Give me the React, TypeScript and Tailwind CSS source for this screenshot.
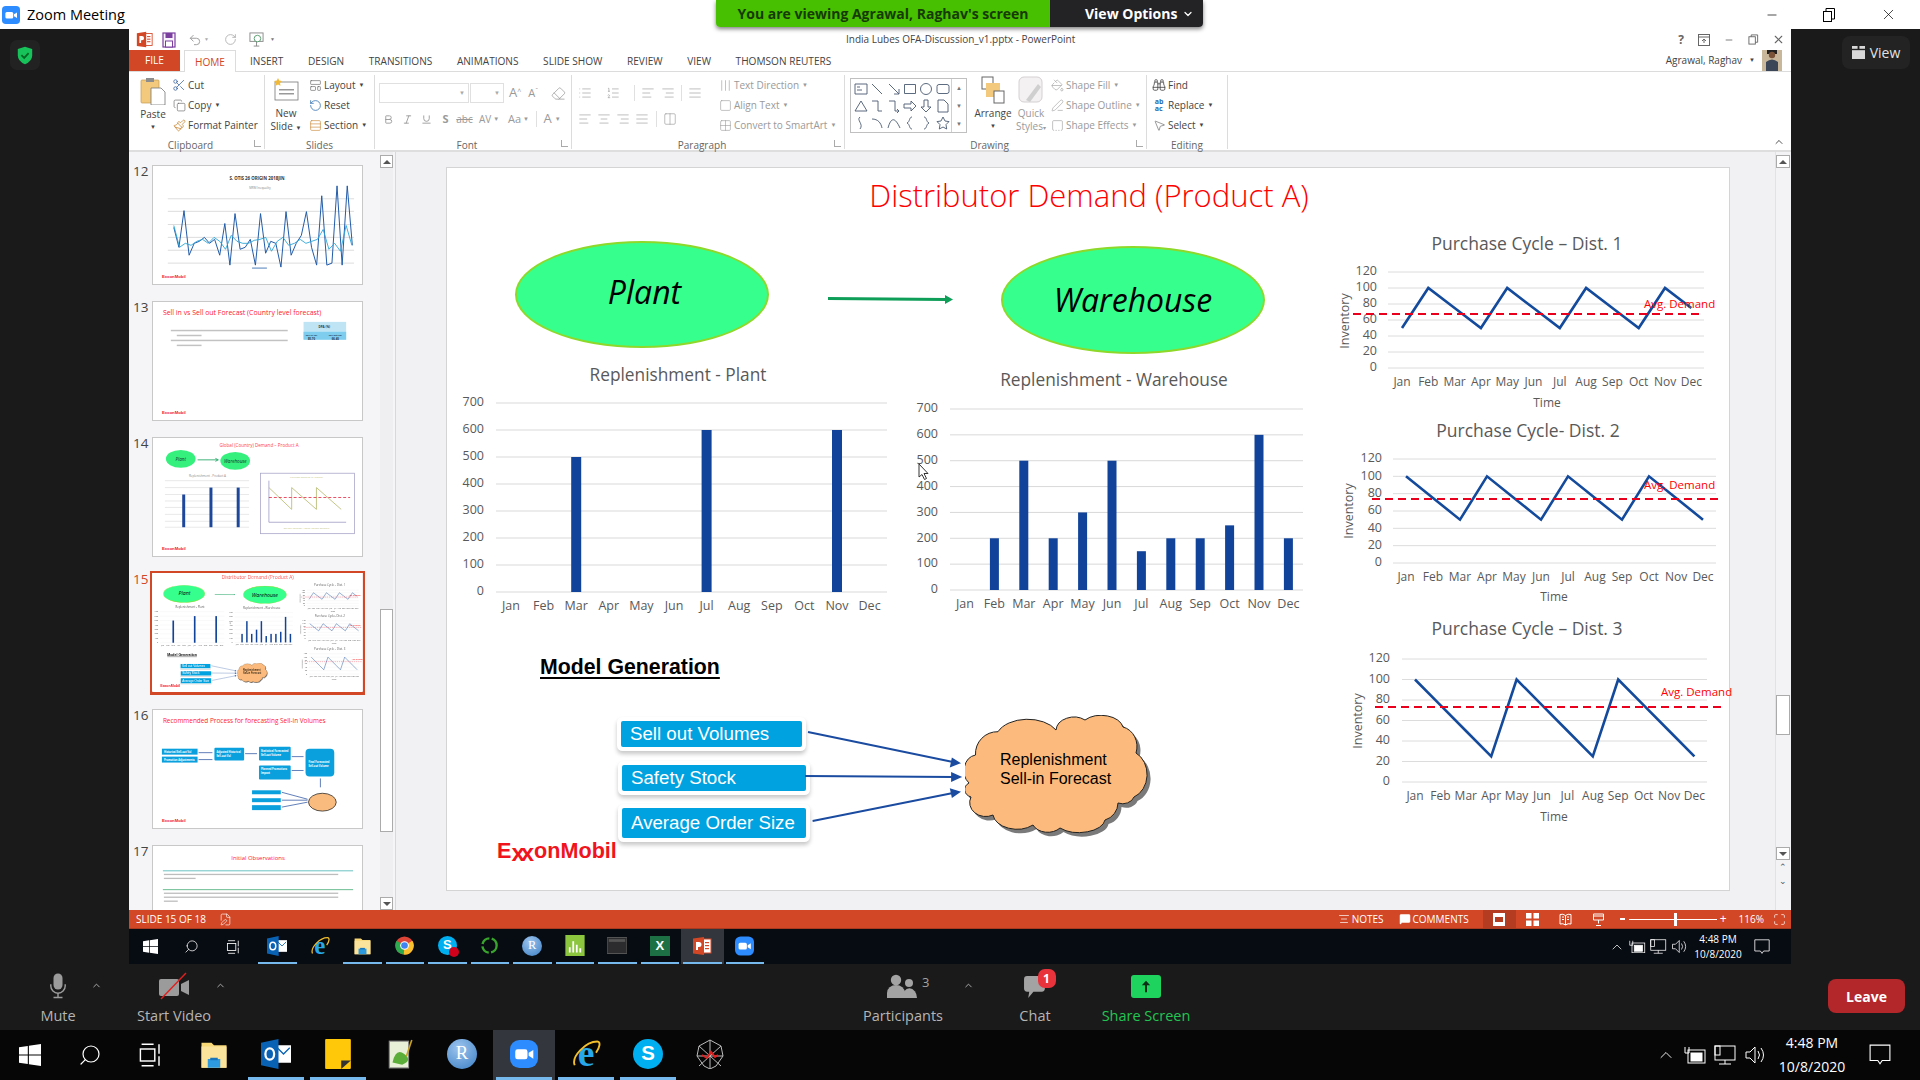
import React from "react";
import {
  Scissors, Copy, Paintbrush, LayoutTemplate, RotateCcw, RotateCw, Rows3, Undo2, Minus, X, Search,
  Binoculars, MousePointer2, ChevronUp, ChevronDown, Bold, Italic, Underline, Eraser, AlignLeft, AlignCenter, AlignRight,
  AlignJustify, List, ListOrdered, Columns2, Grid2x2, Square, SquareDashedBottom, PaintBucket, PenLine, MessageSquare,
  FileEdit, Maximize,
} from "lucide-react";

const MONTHS = ["Jan", "Feb", "Mar", "Apr", "May", "Jun", "Jul", "Aug", "Sep", "Oct", "Nov", "Dec"];
const LABEL_FONT = "'Open Sans', sans-serif";

function BarChart(p: { className: string; vb: string; title: string; tx: number; ty: number; x0: number; x1: number; top: number; bot: number; lx: number; mx: number; mp: number; my: number; bw: number; vals: number[] }) {
  const pitch = (p.bot - p.top) / 7;
  return (
    <svg viewBox={p.vb} className={p.className} fontFamily={LABEL_FONT}>
      <text x={p.tx} y={p.ty} textAnchor="middle" dominantBaseline="middle" fontSize="17.3" fill="#595959">{p.title}</text>
      {[700, 600, 500, 400, 300, 200, 100, 0].map((v, i) => (
        <g key={v}>
          <line x1={p.x0} x2={p.x1} y1={p.top + i * pitch} y2={p.top + i * pitch} stroke="#d9d9d9" strokeWidth="1" />
          <text x={p.lx} y={p.top + i * pitch} textAnchor="end" dominantBaseline="middle" fontSize="12.5" fill="#595959">{v}</text>
        </g>
      ))}
      {p.vals.map((v, i) => (
        <g key={i}>
          {v > 0 && <rect x={p.mx + i * p.mp - p.bw / 2} y={p.bot - (v / 100) * pitch} width={p.bw} height={(v / 100) * pitch} fill="#104399" />}
          <text x={p.mx + i * p.mp} y={p.my} textAnchor="middle" dominantBaseline="middle" fontSize="12.5" fill="#595959">{MONTHS[i]}</text>
        </g>
      ))}
    </svg>
  );
}

function LineChart(p: { className: string; vb: string; title: string; tx: number; ty: number; x0: number; x1: number; top: number; bot: number; lx: number; mx: number; mp: number; my: number; timeX: number; timeY: number; invX: number; invY: number; vals: number[]; dx0: number; dx1: number; dy: number; ax: number; ay: number }) {
  const pitch = (p.bot - p.top) / 6;
  const pts = p.vals.map((v, i) => `${p.mx + i * p.mp},${p.bot - (v / 20) * pitch}`).join(" ");
  return (
    <svg viewBox={p.vb} className={p.className} fontFamily={LABEL_FONT}>
      <text x={p.tx} y={p.ty} textAnchor="middle" dominantBaseline="middle" fontSize="17.5" fill="#595959">{p.title}</text>
      {[120, 100, 80, 60, 40, 20, 0].map((v, i) => (
        <g key={v}>
          <line x1={p.x0} x2={p.x1} y1={p.top + i * pitch} y2={p.top + i * pitch} stroke="#dcdcdc" strokeWidth="1" />
          <text x={p.lx} y={p.top + i * pitch} textAnchor="end" dominantBaseline="middle" fontSize="12.5" fill="#595959">{v}</text>
        </g>
      ))}
      {MONTHS.map((m, i) => (
        <text key={m} x={p.mx + i * p.mp} y={p.my} textAnchor="middle" dominantBaseline="middle" fontSize="12" fill="#595959">{m}</text>
      ))}
      <text x={p.timeX} y={p.timeY} textAnchor="middle" dominantBaseline="middle" fontSize="12" fill="#595959">Time</text>
      <text x={p.invX} y={p.invY} textAnchor="middle" dominantBaseline="middle" fontSize="12.5" fill="#595959" transform={`rotate(-90 ${p.invX} ${p.invY})`}>Inventory</text>
      <polyline points={pts} fill="none" stroke="#144a9c" strokeWidth="2.6" strokeLinejoin="miter" />
      <line x1={p.dx0} x2={p.dx1} y1={p.dy} y2={p.dy} stroke="#e8001c" strokeWidth="1.8" strokeDasharray="8 5" />
      <text x={p.ax} y={p.ay} dominantBaseline="middle" fontSize="11.5" fill="#ff0000">Avg. Demand</text>
    </svg>
  );
}

function Cloud() {
  const d = "M10.5 40 A22 22 0 0 1 33 16.7 A32 20 0 0 1 91 15 A18 14 0 0 1 120 5 A22 14 0 0 1 158 12 A18 20 0 0 1 171 38 A20 24 0 0 1 169 82 A12 10 0 0 1 153 88 A18 18 0 0 1 140 105 A26 14 0 0 1 95 113 A16 12 0 0 1 68 110 A24 16 0 0 1 28 100 A16 14 0 0 1 6 82 A10 8 0 0 1 4 68 A14 16 0 0 1 10.5 40 Z";
  return (
    <svg viewBox="0 0 186 124" className="absolute left-[518px] top-[547px] w-[186px] h-[124px]">
      <path d={d} fill="#7a7a7a" transform="translate(3.5 4)" />
      <path d={d} fill="#fcbb7c" stroke="#222" strokeWidth="1" />
    </svg>
  );
}

function SlideBox({ className, text }: { className: string; text: string }) {
  return (
    <div className={`absolute bg-[#00a2e0] border-0 rounded-[2px] shadow-[0_0_0_4px_#fff,0_3px_4px_4px_#c8c8c8] flex items-center pl-[9px] text-white text-[18.7px] leading-none font-['Liberation_Sans',Arial,sans-serif] ${className}`}>
      {text}
    </div>
  );
}

function Slide() {
  return (
    <div className="relative w-[1282px] h-[722px] bg-white shadow-[0_0_0_1px_#d4d4d4] font-['Open_Sans',sans-serif]">
      <div className="absolute inset-x-0 top-[5px] pl-[2px] text-center text-[31px] leading-[44px] text-[#ff0000] font-light">Distributor Demand (Product A)</div>
      <div className="absolute left-[68px] top-[73px] w-[254px] h-[107px] rounded-[50%] bg-[#36ff8e] border-2 border-[#8ed82a] flex items-center justify-center pl-[5px] pb-[6px] italic text-[32px] text-black">Plant</div>
      <div className="absolute left-[554px] top-[78px] w-[264px] h-[108px] rounded-[50%] bg-[#36ff8e] border-2 border-[#8ed82a] flex items-center justify-center italic text-[32px] text-black">Warehouse</div>
      <svg viewBox="0 0 130 12" className="absolute left-[379px] top-[125px] w-[130px] h-[12px]">
        <path d="M2 5.5 L120 6.5" stroke="#0e9e58" strokeWidth="3" />
        <path d="M119 2 L127 6.5 L119 11 Z" fill="#0e9e58" />
      </svg>
      <BarChart className="absolute left-[8px] top-[193px] w-[440px] h-[260px]" vb="455 360 440 260" title="Replenishment - Plant" tx={678} ty={375} x0={496} x1={887} top={402} bot={591} lx={484} mx={511} mp={32.6} my={606} bw={10} vals={[0, 0, 500, 0, 0, 0, 600, 0, 0, 0, 600, 0]} />
      <BarChart className="absolute left-[458px] top-[198px] w-[410px] h-[250px]" vb="905 365 410 250" title="Replenishment - Warehouse" tx={1114} ty={380} x0={950} x1={1303} top={408} bot={589} lx={938} mx={965} mp={29.4} my={604} bw={9} vals={[0, 200, 500, 200, 300, 500, 150, 200, 200, 250, 600, 200]} />
      <LineChart className="absolute left-[888px] top-[65px] w-[390px] h-[180px] overflow-visible" vb="1335 232 390 180" title="Purchase Cycle – Dist. 1" tx={1527} ty={244} x0={1388} x1={1704} top={271} bot={367} lx={1377} mx={1402} mp={26.3} my={382} timeX={1547} timeY={403} invX={1346} invY={320} vals={[50, 100, 75, 50, 100, 75, 50, 100, 75, 50, 100, 75]} dx0={1353} dx1={1700} dy={313} ax={1644} ay={304} />
      <LineChart className="absolute left-[888px] top-[253px] w-[390px] h-[186px] overflow-visible" vb="1335 420 390 186" title="Purchase Cycle- Dist. 2" tx={1528} ty={431} x0={1393} x1={1716} top={458} bot={562} lx={1382} mx={1406} mp={27} my={577} timeX={1554} timeY={597} invX={1350} invY={510} vals={[100, 75, 50, 100, 75, 50, 100, 75, 50, 100, 75, 50]} dx0={1372} dx1={1718} dy={498} ax={1644} ay={485} />
      <LineChart className="absolute left-[898px] top-[451px] w-[390px] h-[208px] overflow-visible" vb="1345 618 390 208" title="Purchase Cycle – Dist. 3" tx={1527} ty={629} x0={1402} x1={1707} top={658} bot={781} lx={1390} mx={1415} mp={25.4} my={796} timeX={1554} timeY={817} invX={1359} invY={720} vals={[100, 75, 50, 25, 100, 75, 50, 25, 100, 75, 50, 25]} dx0={1375} dx1={1722} dy={706} ax={1661} ay={692} />
      <div className="absolute left-[93px] top-[485px] text-[21.3px] leading-[28px] font-bold underline underline-offset-[3px] text-black font-['Liberation_Sans',Arial,sans-serif]">Model Generation</div>
      <SlideBox className="left-[174px] top-[553px] w-[181px] h-[26px]" text="Sell out Volumes" />
      <SlideBox className="left-[175px] top-[597px] w-[184px] h-[26px]" text="Safety Stock" />
      <SlideBox className="left-[175px] top-[640px] w-[184px] h-[30px]" text="Average Order Size" />
      <svg viewBox="0 0 170 110" className="absolute left-[350px] top-[555px] w-[170px] h-[110px]">
        <g stroke="#1a4ba0" strokeWidth="1.8" fill="#1a4ba0">
          <line x1="11" y1="9" x2="156" y2="39" />
          <path d="M162 40 L154 43 L155.5 36 Z" />
          <line x1="8" y1="53" x2="157" y2="54" />
          <path d="M163 54 L155 57.5 L155 50.5 Z" />
          <line x1="15.6" y1="98" x2="156" y2="70" />
          <path d="M162 69 L155.5 73.5 L154 66.5 Z" />
        </g>
      </svg>
      <Cloud />
      <div className="absolute left-[518px] top-[582px] w-[170px] pl-[35px] text-[16px] leading-[19px] text-black font-['Liberation_Sans',Arial,sans-serif]">Replenishment<br />Sell-in Forecast</div>
      <div className="absolute left-[50px] top-[667px] flex items-baseline text-[21.6px] leading-[30px] font-bold text-[#f0141e] font-['Liberation_Sans',Arial,sans-serif]">
        E<span className="tracking-[-4px] text-[24px] translate-y-[3px] inline-block pr-[4px]">xx</span>onMobil
      </div>
      <svg viewBox="0 0 12 18" className="absolute left-[471px] top-[295px] w-[12px] h-[18px]">
        <path d="M1 1 L1 14 L4 11.5 L6.5 16.5 L8.5 15.5 L6 10.5 L10 10.5 Z" fill="#fff" stroke="#333" strokeWidth="1" />
      </svg>
    </div>
  );
}

function Exxon({ y }: { y: number }) {
  return <text x="9" y={y} fontSize="4.3" fontWeight="700" fill="#f0141e" fontFamily="'Liberation Sans', sans-serif">ExxonMobil</text>;
}

function Thumb12() {
  const a = [62, 82, 45, 90, 78, 76, 72, 78, 74, 90, 58, 100, 48, 84, 82, 74, 100, 48, 88, 76, 78, 102, 46, 90, 78, 70, 46, 82, 100, 30, 100, 98, 20, 100, 20, 80];
  const b = [60, 82, 78, 80, 76, 74, 78, 72, 76, 84, 70, 76, 78, 78, 75, 74, 72, 86, 76, 72, 80, 78, 74, 78, 76, 74, 64, 84, 78, 86, 60, 80];
  return (
    <svg viewBox="0 0 211 119" className="w-full h-full">
      <text x="105" y="14" textAnchor="middle" fontSize="4.4" fontWeight="700" fill="#333" fontFamily={LABEL_FONT}>S. OTIS 26 ORIGIN 2018JIN</text>
      <text x="108" y="23" textAnchor="middle" fontSize="3" fill="#888" fontFamily={LABEL_FONT}>MRM Inequality</text>
      {[33, 45.7, 59, 72, 85, 98].map((y) => <line key={y} x1="15" x2="203" y1={y} y2={y} stroke="#d4d4d4" strokeWidth="0.8" />)}
      <polyline points={a.map((v, i) => `${21 + i * 5.15},${v}`).join(" ")} fill="none" stroke="#1f5aa8" strokeWidth="1" />
      <polyline points={b.map((v, i) => `${21 + i * 5.8},${v}`).join(" ")} fill="none" stroke="#2ba6d6" strokeWidth="0.9" />
      <line x1="100" x2="115" y1="103" y2="103" stroke="#1f5aa8" strokeWidth="0.8" />
      <Exxon y={113} />
    </svg>
  );
}

function Thumb13() {
  return (
    <svg viewBox="0 0 211 119" className="w-full h-full" fontFamily={LABEL_FONT}>
      <text x="10" y="13" fontSize="7" fill="#ff2030">Sell in vs Sell out Forecast (Country level forecast)</text>
      {[28, 33, 38, 43].map((y, i) => <rect key={y} x={i % 2 ? 24 : 18} y={y} width={i % 2 ? 25 : 118} height="1.5" fill="#c2c2c2" />)}
      <rect x="152" y="20" width="43" height="18" fill="#bfe5f5" />
      <rect x="152" y="30" width="43" height="8" fill="#7fcdee" />
      <text x="173" y="26" textAnchor="middle" fontSize="3" fontWeight="700" fill="#234">DPA (%)</text>
      <text x="160" y="34" textAnchor="middle" fontSize="2.4" fontWeight="700" fill="#234">Sell in Vol</text>
      <text x="184" y="34" textAnchor="middle" fontSize="2.4" fontWeight="700" fill="#234">Sell out Vol</text>
      <text x="160" y="38" textAnchor="middle" fontSize="2.8" fontWeight="700" fill="#234">85.70</text>
      <text x="184" y="38" textAnchor="middle" fontSize="2.8" fontWeight="700" fill="#234">66.40</text>
      <Exxon y={113} />
    </svg>
  );
}

function Thumb14() {
  return (
    <svg viewBox="0 0 211 119" className="w-full h-full" fontFamily={LABEL_FONT}>
      <text x="107" y="9" textAnchor="middle" fontSize="4.6" fill="#ff4050">Global (Country) Demand – Product A</text>
      <ellipse cx="28" cy="21" rx="15" ry="9" fill="#36f07e" />
      <ellipse cx="83" cy="23" rx="15" ry="9" fill="#36f07e" />
      <text x="28" y="23" textAnchor="middle" fontSize="4.6" fontStyle="italic" fill="#133">Plant</text>
      <text x="83" y="25" textAnchor="middle" fontSize="4.6" fontStyle="italic" fill="#133">Warehouse</text>
      <path d="M45 22 H65 M63 20.5 L66 22 L63 23.5" stroke="#0e9e58" strokeWidth="0.8" fill="none" />
      <text x="55" y="39" textAnchor="middle" fontSize="3" fill="#888">Replenishment - Product A</text>
      {[43, 50, 57, 63.5, 70, 77, 84, 90].map((y) => <line key={y} x1="12" x2="97" y1={y} y2={y} stroke="#d8d8d8" strokeWidth="0.6" />)}
      <rect x="29.5" y="57" width="3" height="33" fill="#1c479b" />
      <rect x="57" y="50" width="3" height="40" fill="#1c479b" />
      <rect x="84.5" y="50" width="3" height="40" fill="#1c479b" />
      <rect x="108.5" y="35.5" width="95" height="61" fill="#fff" stroke="#a9a6c8" strokeWidth="0.8" />
      <path d="M117 43 V85 H195" stroke="#7d78b0" strokeWidth="0.6" fill="none" />
      <path d="M117 50 L140 72 V50 L165 72 V50 L190 72" stroke="#bcbf78" strokeWidth="0.9" fill="none" />
      <line x1="117" x2="199" y1="60" y2="60" stroke="#e00020" strokeWidth="0.7" strokeDasharray="3 2" />
      <text x="155" y="40" textAnchor="middle" fontSize="2.4" fill="#bcbf78">Purchase Behavior by Product</text>
      <text x="155" y="92" textAnchor="middle" fontSize="2.4" fill="#bcbf78">Sell-out Forecast | Sales Volume Estimate</text>
      <Exxon y={113} />
    </svg>
  );
}

function Thumb16() {
  const boxes = [[9, 39, 36, 6, 0], [9, 47, 36, 6, 0], [62, 38, 30, 13, 1], [107, 37, 32, 14, 1], [107, 56, 32, 14, 1], [154, 39, 29, 28, 4], [100, 81, 29, 4, 0], [100, 89, 29, 4, 0], [100, 96, 29, 5, 0]];
  const labels: [number, number, string][] = [[11, 43.5, "Historical Sell-out Vol"], [11, 51.5, "Promotion Adjustments"], [64, 43, "Adjusted Historical"], [64, 47, "Sell-out Vol"], [109, 42, "Statistical Forecasted"], [109, 46, "Sell-out Volume"], [109, 61, "Planned Promotions"], [109, 65, "Impact"], [157, 53, "Final Forecasted"], [157, 57, "Sell-out Volume"]];
  return (
    <svg viewBox="0 0 211 119" className="w-full h-full" fontFamily={LABEL_FONT}>
      <text x="10" y="13" fontSize="6.5" fill="#ff2030">Recommended Process for forecasting Sell-in Volumes</text>
      {boxes.map((b, i) => <rect key={i} x={b[0]} y={b[1]} width={b[2]} height={b[3]} rx={b[4]} fill="#0aa0de" />)}
      {labels.map(([x, y, t]) => <text key={t + y} x={x} y={y} fontSize="2.6" fontWeight="700" fill="#fff">{t}</text>)}
      <g stroke="#1c479b" strokeWidth="0.7" fill="none">
        <path d="M46 43 H60 M46 50 H60 M93 44 H105 M140 47 H152 M140 61 H152 M169 69 V78 M130 83 L156 90 M130 91 H156 M130 98 L156 93" />
      </g>
      <ellipse cx="171" cy="93" rx="14" ry="9" fill="#f9bb7e" stroke="#111" strokeWidth="0.7" />
      <Exxon y={113} />
    </svg>
  );
}

function Thumb17() {
  return (
    <svg viewBox="0 0 211 119" className="w-full h-full" fontFamily={LABEL_FONT}>
      <text x="106" y="14" textAnchor="middle" fontSize="6" fill="#ff2030">Initial Observations</text>
      <line x1="10" x2="202" y1="25" y2="25" stroke="#28a8a8" strokeWidth="0.7" />
      <line x1="10" x2="202" y1="44" y2="44" stroke="#2a9f60" strokeWidth="0.7" />
      {[28, 32, 47, 51, 55].map((y, i) => <rect key={y} x="11" y={y} width={i === 1 ? 32 : i === 4 ? 14 : 176} height="1.3" fill="#bdbdbd" />)}
    </svg>
  );
}

function Thumb({ n, active, children }: { n: number; active?: boolean; children: React.ReactNode }) {
  return (
    <div className="flex h-[120px] shrink-0">
      <div className={`w-[23px] pl-[4px] text-[13.5px] leading-[12px] ${active ? "text-[#d24726]" : "text-[#444]"}`}>{n}</div>
      <div className={`w-[211px] h-[120px] bg-white overflow-hidden ${active ? "outline-[3px] outline-[#d24726] outline -outline-offset-1" : "border border-[#c8c8c8]"}`}>{children}</div>
    </div>
  );
}

function ThumbPane() {
  return (
    <div className="w-[267px] flex border-r border-[#d8d8d8] bg-[#f5f5f7] shrink-0">
      <div className="w-[251px] pt-[13px] overflow-hidden flex flex-col gap-[16px]">
        <Thumb n={12}><Thumb12 /></Thumb>
        <Thumb n={13}><Thumb13 /></Thumb>
        <Thumb n={14}><Thumb14 /></Thumb>
        <Thumb n={15} active>
          <div className="w-[1282px] h-[722px] scale-[0.1645] origin-top-left blur-[1.5px]"><Slide /></div>
        </Thumb>
        <Thumb n={16}><Thumb16 /></Thumb>
        <Thumb n={17}><Thumb17 /></Thumb>
      </div>
      <div className="w-[13px] flex flex-col bg-[#efeff1] pt-[3px]">
        <ScrollBtn up />
        <div className="h-[441px]" />
        <div className="h-[223px] bg-white border border-[#ababab]" />
        <div className="flex-1" />
        <ScrollBtn />
      </div>
    </div>
  );
}

function ScrollBtn({ up }: { up?: boolean }) {
  return (
    <div className="h-[13px] bg-white border border-[#ababab] flex items-center justify-center">
      <div className={`w-0 h-0 border-x-[4px] border-x-transparent ${up ? "border-b-[4px] border-b-[#555]" : "border-t-[4px] border-t-[#555]"}`} />
    </div>
  );
}

function MainView() {
  return (
    <div className="flex-1 flex bg-[#f1f1f4]">
      <div className="flex-1 pl-[51px] pt-[16px]"><Slide /></div>
      <div className="w-[16px] flex flex-col pt-[3px] pr-[1px] bg-[#f3f3f5] border-l border-[#e2e2e4]">
        <ScrollBtn up />
        <div className="h-[527px]" />
        <div className="h-[40px] bg-white border border-[#ababab]" />
        <div className="h-[112px]" />
        <ScrollBtn />
        <div className="text-[9px] leading-[14px] text-center text-[#555]">⌃</div>
        <div className="text-[9px] leading-[14px] text-center text-[#555]">⌄</div>
      </div>
    </div>
  );
}

function RGroup({ className, label, launcher, children }: { className: string; label: string; launcher?: boolean; children: React.ReactNode }) {
  return (
    <div className={`relative flex flex-col border-r border-[#dcdcdc] mt-[3px] h-[74px] ${className}`}>
      <div className="h-[63px] shrink-0 flex">{children}</div>
      <div className={`h-[11px] text-center text-[10px] leading-[14px] text-[#666] ${launcher ? "pr-[12px]" : ""}`}>{label}</div>
      {launcher && <div className="absolute right-[3px] bottom-[2px] w-[7px] h-[7px] border-l border-b border-[#aaa]" />}
    </div>
  );
}

function RItem({ icon, text, arrow, dim }: { icon: React.ReactNode; text: string; arrow?: boolean; dim?: boolean }) {
  return (
    <div className={`flex items-center h-[20px] gap-[1px] whitespace-nowrap text-[10px] ${dim ? "text-[#9a9a9a]" : "text-[#444]"}`}>
      <div className="w-[16px] flex justify-center shrink-0">{icon}</div>
      <span>{text}</span>
      {arrow && <span className="text-[6px] ml-[2px]">▼</span>}
    </div>
  );
}

function Shape({ d }: { d: string }) {
  return (
    <svg viewBox="0 0 14 14" className="w-[14px] h-[14px]" fill="none" stroke="#4a5a72" strokeWidth="0.9"><path d={d} /></svg>
  );
}

const SHAPES = [
  "M1 2h12v10H1z M3 5h3 M3 8h5", "M2 2l10 10", "M2 2l10 10m0-5v5h-5", "M1.5 2.5h11v9h-11z", "M12.5 7a5.5 5.5 0 1 1-11 0 5.5 5.5 0 0 1 11 0z", "M3 2.5h8a2 2 0 0 1 2 2v5a2 2 0 0 1-2 2H3a2 2 0 0 1-2-2v-5a2 2 0 0 1 2-2z",
  "M7 2L13 12H1Z", "M2 2h6v10h4", "M2 2h6v10h4m-2-2 2 2-2 2", "M1 5h7V2l5 5-5 5V9H1z", "M5 1h4v7h3l-5 5-5-5h3z", "M2 1h6l4 4v8H2z",
  "M6 1C2 4 10 8 6 13", "M2 3c6 0 9 4 10 9", "M1 12C4 1 8 1 13 12", "M9 1C6 1 7 6 4 7c3 1 2 6 5 6", "M5 1c3 0 2 5 5 6-3 1-2 6-5 6", "M7 1l2 4 4 .6-3 3 .7 4.4L7 11l-3.7 2 .7-4.4-3-3L5 5z",
];

function Ribbon() {
  const g = "#9a9a9a";
  return (
    <div className="h-[80px] flex border-b-2 border-[#dedede] bg-white font-['Open_Sans',sans-serif] text-[#444]">
      <RGroup className="w-[136px]" label="Clipboard" launcher>
        <div className="w-[42px] flex flex-col items-center pl-[6px] text-[10px]">
          <svg viewBox="0 0 26 28" className="w-[26px] h-[28px] mt-[2px]">
            <rect x="1" y="3" width="18" height="23" rx="1" fill="#f2c97d" stroke="#c49a4d" strokeWidth="0.7" />
            <rect x="6" y="1" width="8" height="4" fill="#8d8d8d" />
            <path d="M11 11h10l4 4v13H11z" fill="#fff" stroke="#777" strokeWidth="0.8" />
          </svg>
          <span className="leading-[13px] mt-[3px]">Paste</span>
          <span className="text-[6px] leading-[13px]">▼</span>
        </div>
        <div>
          <RItem icon={<Scissors size={14} strokeWidth={1.2} color="#2b5797" />} text="Cut" />
          <RItem icon={<Copy size={13} strokeWidth={1.2} color="#666" />} text="Copy" arrow />
          <RItem icon={<Paintbrush size={13} strokeWidth={1.5} color="#c98a3a" />} text="Format Painter" />
        </div>
      </RGroup>
      <RGroup className="w-[110px]" label="Slides">
        <div className="w-[42px] flex flex-col items-center text-[10px] leading-[13px]">
          <svg viewBox="0 0 28 24" className="w-[28px] h-[24px] mt-[2px]">
            <rect x="3" y="5" width="23" height="18" fill="#fff" stroke="#777" strokeWidth="0.8" />
            <rect x="7" y="12" width="15" height="1.5" fill="#999" /><rect x="7" y="16" width="15" height="1.5" fill="#999" />
            <path d="M6 1l1.2 2.5L10 4 8 6l.5 2.8L6 7.5 3.5 8.8 4 6 2 4l2.8-.5z" fill="#f0b93a" />
          </svg>
          <span className="mt-[6px]">New</span>
          <span>Slide <span className="text-[6px]">▼</span></span>
        </div>
        <div>
          <RItem icon={<LayoutTemplate size={13} strokeWidth={1.2} color="#666" />} text="Layout" arrow />
          <RItem icon={<RotateCcw size={13} strokeWidth={1.4} color="#2b6cb0" />} text="Reset" />
          <RItem icon={<Rows3 size={13} strokeWidth={1.2} color="#c98a3a" />} text="Section" arrow />
        </div>
      </RGroup>
      <RGroup className="w-[197px]" label="Font" launcher>
        <div className="flex flex-col pl-[4px] pt-[8px] gap-[6px]">
          <div className="flex items-center gap-[1px] h-[20px]">
            <div className="w-[90px] h-[20px] border border-[#e0e0e0] flex items-center justify-end pr-[3px] text-[6px] text-[#aaa]">▼</div>
            <div className="w-[34px] h-[20px] border border-[#e0e0e0] flex items-center justify-end pr-[3px] text-[6px] text-[#aaa]">▼</div>
            <span className="ml-[4px] text-[13px] text-[#999]">A<sup className="text-[7px]">^</sup></span>
            <span className="ml-[6px] text-[11px] text-[#999]">A<sup className="text-[7px]">ˇ</sup></span>
            <Eraser size={15} strokeWidth={1.2} color={g} className="ml-[12px]" />
          </div>
          <div className="flex items-center h-[20px] text-[11px] text-[#9a9a9a]">
            <div className="w-[19px] flex justify-center"><Bold size={11} color={g} /></div>
            <div className="w-[19px] flex justify-center"><Italic size={11} color={g} /></div>
            <div className="w-[19px] flex justify-center"><Underline size={11} color={g} /></div>
            <div className="w-[19px] text-center font-bold">S</div>
            <div className="w-[19px] text-center line-through text-[10px]">abc</div>
            <div className="w-[30px] flex items-center justify-center gap-[2px] text-[10px]">AV<span className="text-[6px]">▼</span></div>
            <div className="w-[29px] flex items-center justify-center gap-[2px]">Aa<span className="text-[6px]">▼</span></div>
            <span className="w-[1px] h-[16px] bg-[#e0e0e0] ml-[3px]" />
            <div className="w-[30px] flex items-center justify-center gap-[3px] text-[13px]">A<span className="text-[6px]">▼</span></div>
          </div>
        </div>
      </RGroup>
      <RGroup className="w-[273px]" label="Paragraph" launcher>
        <div className="flex flex-col pl-[6px] pt-[8px] gap-[6px] w-[145px]">
          <div className="flex items-center gap-[6px] h-[20px]">
            <List size={14} strokeWidth={1.1} color={g} /><ListOrdered size={14} strokeWidth={1.1} color={g} className="ml-[8px]" />
            <span className="w-[1px] h-[16px] bg-[#e0e0e0] ml-[8px]" />
            <AlignLeft size={14} strokeWidth={1.1} color={g} /><AlignRight size={14} strokeWidth={1.1} color={g} />
            <span className="w-[1px] h-[16px] bg-[#e0e0e0]" />
            <AlignJustify size={14} strokeWidth={1.1} color={g} />
          </div>
          <div className="flex items-center gap-[5px] h-[20px]">
            <AlignLeft size={14} strokeWidth={1.1} color={g} /><AlignCenter size={14} strokeWidth={1.1} color={g} /><AlignRight size={14} strokeWidth={1.1} color={g} /><AlignJustify size={14} strokeWidth={1.1} color={g} />
            <span className="w-[1px] h-[16px] bg-[#e0e0e0] ml-[2px]" />
            <Columns2 size={14} strokeWidth={1.1} color={g} className="ml-[1px]" />
          </div>
        </div>
        <div>
          <RItem dim icon={<AlignJustify size={13} strokeWidth={1.1} color={g} className="rotate-90" />} text="Text Direction" arrow />
          <RItem dim icon={<Square size={13} strokeWidth={1.1} color={g} />} text="Align Text" arrow />
          <RItem dim icon={<Grid2x2 size={13} strokeWidth={1.1} color={g} />} text="Convert to SmartArt" arrow />
        </div>
      </RGroup>
      <RGroup className="w-[302px]" label="Drawing" launcher>
        <div className="ml-[5px] mt-[3px] w-[117px] h-[55px] border border-[#c0c0c0] flex">
          <div className="w-[100px] grid grid-cols-6 items-center justify-items-center py-[1px] pl-[2px]">
            {SHAPES.map((d) => <Shape key={d} d={d} />)}
          </div>
          <div className="flex-1 border-l border-[#d0d0d0] flex flex-col text-[6px] text-[#777] text-center leading-[18px]">
            <span>▲</span><span>▼</span><span>▼</span>
          </div>
        </div>
        <div className="w-[44px] ml-[4px] flex flex-col items-center text-[10px] leading-[13px]">
          <svg viewBox="0 0 24 28" className="w-[24px] h-[28px] mt-[1px]">
            <rect x="1" y="1" width="11" height="12" fill="#fff" stroke="#666" />
            <rect x="5" y="7" width="14" height="14" fill="#f2c97d" />
            <rect x="13" y="15" width="10" height="12" fill="#fff" stroke="#666" />
          </svg>
          <span className="mt-[3px]">Arrange</span>
          <span className="text-[6px]">▼</span>
        </div>
        <div className="w-[32px] flex flex-col items-center text-[10px] leading-[13px] text-[#9a9a9a]">
          <svg viewBox="0 0 26 28" className="w-[26px] h-[28px] mt-[1px]">
            <rect x="1" y="1" width="23" height="25" rx="5" fill="#f4f1f2" stroke="#d5d0d2" />
            <path d="M8 24 L20 8 L23 11 L12 26 Z" fill="#cfcfcf" />
          </svg>
          <span className="mt-[3px]">Quick</span>
          <span>Styles<span className="text-[6px]">▾</span></span>
        </div>
        <div className="pl-[2px]">
          <RItem dim icon={<PaintBucket size={13} strokeWidth={1.1} color={g} />} text="Shape Fill" arrow />
          <RItem dim icon={<PenLine size={13} strokeWidth={1.1} color={g} />} text="Shape Outline" arrow />
          <RItem dim icon={<SquareDashedBottom size={13} strokeWidth={1.1} color={g} />} text="Shape Effects" arrow />
        </div>
      </RGroup>
      <RGroup className="w-[81px]" label="Editing">
        <div className="pl-[4px]">
          <RItem icon={<Binoculars size={14} strokeWidth={1.4} color="#444" />} text="Find" />
          <RItem icon={<span className="text-[7px] leading-[7px] text-[#2b6cb0] font-bold">ab<br />ac</span>} text="Replace" arrow />
          <RItem icon={<MousePointer2 size={13} strokeWidth={1} color="#444" />} text="Select" arrow />
        </div>
      </RGroup>
      <div className="flex-1 flex items-end justify-end pr-[6px] pb-[2px]"><ChevronUp size={12} color="#555" /></div>
    </div>
  );
}

function PPIcon({ className }: { className?: string }) {
  return (
    <svg viewBox="0 0 20 20" className={className}>
      <rect x="7" y="3" width="12" height="14" fill="#fff" stroke="#d24726" />
      <path d="M1 2.5 L12 1 V19 L1 17.5 Z" fill="#d24726" />
      <path d="M4 14V6h3a2.5 2.5 0 0 1 0 5H6v3z" fill="#fff" />
      <rect x="13" y="6" width="4" height="1.2" fill="#d24726" /><rect x="13" y="9" width="4" height="1.2" fill="#d24726" /><rect x="13" y="12" width="4" height="1.2" fill="#d24726" />
    </svg>
  );
}

function ZoomIcon({ className, r = 5 }: { className?: string; r?: number }) {
  return (
    <svg viewBox="0 0 24 24" className={className}>
      <rect x="0" y="0" width="24" height="24" rx={r} fill="#2d8cff" />
      <rect x="4.5" y="8" width="10.5" height="8.5" rx="2" fill="#fff" />
      <path d="M16 11 L20 8.5 V16 L16 13.5 Z" fill="#fff" />
    </svg>
  );
}

function PPTop() {
  return (
    <>
      <div className="h-[21px] relative flex items-center bg-white font-['Open_Sans',sans-serif] text-[#444]">
        <div className="flex items-center pl-[7px]">
          <PPIcon className="w-[17px] h-[17px]" />
          <svg viewBox="0 0 14 16" className="w-[14px] h-[16px] ml-[9px]"><rect x="1" y="1" width="12" height="14" fill="#f7f2fb" stroke="#7b3fa0" strokeWidth="1.2" /><rect x="3.5" y="1" width="7" height="5" fill="#7b3fa0" /><rect x="3.5" y="9" width="7" height="6" fill="#fff" stroke="#7b3fa0" /></svg>
          <Undo2 size={14} color="#999" strokeWidth={1.6} className="ml-[12px]" /><span className="text-[5px] text-[#aaa] ml-[2px]">▼</span>
          <RotateCw size={13} color="#aaa" strokeWidth={1.5} className="ml-[15px]" />
          <svg viewBox="0 0 16 16" className="w-[15px] h-[15px] ml-[12px]" fill="none" stroke="#8a8a8a"><rect x="1" y="1" width="14" height="9" /><path d="M8 10v5M5 15h6" /><circle cx="9" cy="7" r="3.5" fill="#fff" stroke="#5a9e6f" /></svg>
          <span className="text-[5px] text-[#777] ml-[6px]">▼</span>
        </div>
        <div className="absolute left-[717px] top-[3px] text-[10px] leading-[15px] whitespace-nowrap">India Lubes OFA-Discussion_v1.pptx - PowerPoint</div>
        <div className="ml-auto flex items-center gap-[11px] pr-[6px]">
          <span className="text-[12px] font-bold text-[#666] mr-[3px]">?</span>
          <svg viewBox="0 0 12 12" className="w-[12px] h-[12px]" fill="none" stroke="#666"><rect x=".5" y=".5" width="11" height="11" /><path d="M.5 3h11M6 9V5M4 7l2-2 2 2" /></svg>
          <Minus size={10} color="#666" className="ml-[3px]" />
          <svg viewBox="0 0 12 12" className="w-[11px] h-[11px] ml-[3px]" fill="none" stroke="#666"><rect x="1" y="3" width="7" height="8" /><path d="M3.5 3V1h7v8H8" /></svg>
          <X size={13} color="#666" className="ml-[2px]" />
        </div>
      </div>
      <div className="h-[22px] flex items-end border-b border-[#dcdcdc] bg-white font-['Open_Sans',sans-serif] text-[10.1px] text-[#444] leading-[22px]">
        <div className="w-[51px] h-[22px] bg-[#d24726] text-white text-center">FILE</div>
        <div className="w-[52px] h-[22px] ml-[4px] -mb-[1px] bg-white border border-b-0 border-[#dcdcdc] text-[#d24726] text-center">HOME</div>
        <div className="flex h-[21px] gap-[24.6px] ml-[14px]">
          {["INSERT", "DESIGN", "TRANSITIONS", "ANIMATIONS", "SLIDE SHOW", "REVIEW", "VIEW", "THOMSON REUTERS"].map((t) => <span key={t}>{t}</span>)}
        </div>
        <div className="ml-auto h-[22px] flex items-center pr-[9px] text-[10px]">
          <span className="whitespace-nowrap">Agrawal, Raghav</span>
          <span className="text-[6px] ml-[7px] mr-[7px]">▼</span>
          <svg viewBox="0 0 20 22" className="w-[20px] h-[22px]"><rect width="20" height="22" fill="#c9b79b" /><rect x="5" y="0" width="10" height="5" fill="#222" /><circle cx="10" cy="6" r="3.2" fill="#7a5238" /><path d="M4 22 V13 Q10 8 16 13 V22Z" fill="#3b4658" /></svg>
        </div>
      </div>
    </>
  );
}

function StatusBar() {
  return (
    <div className="h-[19px] bg-[#d24726] flex items-center text-white text-[10px] font-['Open_Sans',sans-serif] border-b border-[#a93a20]">
      <span className="ml-[7px] whitespace-nowrap">SLIDE 15 OF 18</span>
      <FileEdit size={13} strokeWidth={1.2} className="ml-[13px]" />
      <div className="ml-auto flex items-center h-full">
        <AlignCenter size={12} strokeWidth={1.4} />
        <span className="ml-[2px]">NOTES</span>
        <MessageSquare size={12} fill="#fff" strokeWidth={1} className="ml-[15px]" />
        <span className="ml-[2px]">COMMENTS</span>
        <div className="w-[33px] h-full bg-[#b43d21] ml-[14px] flex items-center justify-center"><div className="w-[12px] h-[13px] bg-white border-[2px] border-white flex items-center"><div className="w-[8px] h-[5px] bg-[#b43d21]" /></div></div>
        <svg viewBox="0 0 13 13" className="w-[13px] h-[13px] ml-[10px]" fill="#fff"><rect width="5.5" height="5.5" /><rect x="7.5" width="5.5" height="5.5" /><rect y="7.5" width="5.5" height="5.5" /><rect x="7.5" y="7.5" width="5.5" height="5.5" /></svg>
        <svg viewBox="0 0 13 13" className="w-[13px] h-[13px] ml-[20px]" fill="none" stroke="#fff"><path d="M6.5 2.5 Q4 .5 1 1.5V11Q4 10 6.5 12 9 10 12 11V1.5Q9 .5 6.5 2.5V12M3 4h2M3 6.5h2M8 4h2M8 6.5h2" /></svg>
        <svg viewBox="0 0 13 13" className="w-[13px] h-[13px] ml-[20px]" fill="none" stroke="#fff"><path d="M1.5 1h10v6h-10zM6.5 7v3.5M4 12.5h5" /><path d="M1.5 3h10" /></svg>
        <div className="ml-[15px] w-[5px] h-[2px] bg-white" />
        <div className="ml-[4px] w-[88px] h-[1px] bg-white relative"><div className="absolute left-[45px] -top-[6px] w-[3px] h-[13px] bg-white" /></div>
        <span className="ml-[3px] text-[12px] leading-none">+</span>
        <span className="ml-[12px]">116%</span>
        <Maximize size={13} strokeWidth={1.3} className="ml-[9px] mr-[5px]" />
      </div>
    </div>
  );
}

function WinLogo({ s }: { s: number }) {
  return (
    <svg viewBox="0 0 20 20" width={s} height={s} fill="#fff"><path d="M0 3l8-1.2V9.5H0zM9 1.6L20 0v9.5H9zM0 10.5h8v7.7L0 17zM9 10.5h11V20L9 18.4z" /></svg>
  );
}
function SearchGlyph({ s }: { s: number }) { return <Search size={s} color="#fff" strokeWidth={1.2} className="-scale-x-100" />; }
function TaskView({ s }: { s: number }) {
  return <svg viewBox="0 0 20 20" width={s} height={s} fill="none" stroke="#fff" strokeWidth="1.2"><path d="M3 1h10M3 19h10" /><rect x="2" y="5" width="12" height="10" /><path d="M17.5 1v8M17.5 11v8" /></svg>;
}
function Folder({ s }: { s: number }) {
  return <svg viewBox="0 0 24 24" width={s} height={s}><path d="M2 3h8l2 2h10v18H2z" fill="#f8d775" /><rect x="2" y="6" width="20" height="17" fill="#fbe39b" /><path d="M7 23v-7h10v7z" fill="#2d9ae0" /><rect x="9" y="15" width="6" height="2" fill="#1976bb" /></svg>;
}
function Outlook({ s }: { s: number }) {
  return <svg viewBox="0 0 24 24" width={s} height={s}><rect x="12" y="5" width="12" height="14" fill="#fff" /><path d="M13 7l5 5 5-5" stroke="#0a62b5" fill="none" /><path d="M0 3L14 0V24L0 21Z" fill="#0a62b5" /><ellipse cx="7" cy="12" rx="3.5" ry="4.5" fill="none" stroke="#fff" strokeWidth="1.8" /></svg>;
}
function Ie({ s }: { s: number }) {
  return (
    <span className="relative flex items-center justify-center font-['Liberation_Serif',serif] font-bold leading-none" style={{ width: s, height: s, fontSize: s * 1.25 }}>
      <span className="text-[#27a8e8]">e</span>
      <svg viewBox="0 0 24 24" className="absolute inset-0"><path d="M3 21 C0 14 12 2 21 2 C24 2 23 7 20 11" stroke="#f2c02e" strokeWidth="1.5" fill="none" /></svg>
    </span>
  );
}
function Chrome({ s }: { s: number }) {
  return (
    <svg viewBox="0 0 24 24" width={s} height={s}>
      <circle cx="12" cy="12" r="11.5" fill="#db4437" />
      <path d="M12 12 L2 6 A11.5 11.5 0 0 0 11 23.5 Z" fill="#2da94f" />
      <path d="M12 12 L22 6 A11.5 11.5 0 0 1 11 23.5 Z" fill="#fbc02d" />
      <circle cx="12" cy="12" r="5.5" fill="#fff" /><circle cx="12" cy="12" r="4.2" fill="#3f84f0" />
    </svg>
  );
}
function Skype({ s, badge }: { s: number; badge?: boolean }) {
  return (
    <span className="relative flex items-center justify-center rounded-full bg-[#00aff0] text-white font-bold font-['Liberation_Sans',sans-serif] leading-none" style={{ width: s, height: s, fontSize: s * 0.68 }}>
      S{badge && <span className="absolute -right-[2px] -bottom-[2px] w-[10px] h-[10px] rounded-full bg-[#d0021b]" />}
    </span>
  );
}
function RLogo({ s }: { s: number }) {
  return <span className="flex items-center justify-center rounded-full bg-[radial-gradient(circle_at_40%_30%,#9cc4ee,#3b7fc4)] text-white font-['Liberation_Serif',serif] leading-none" style={{ width: s, height: s, fontSize: s * 0.62 }}>R</span>;
}
function TileText({ bg, children, s }: { bg: string; children: React.ReactNode; s: number }) {
  return <span className={`flex items-center justify-center text-white font-bold text-[13px] leading-none font-['Liberation_Sans',sans-serif] ${bg}`} style={{ width: s, height: s }}>{children}</span>;
}

function TBtn({ under, active, narrow, children }: { under?: boolean; active?: boolean; narrow?: boolean; children: React.ReactNode }) {
  return (
    <div className={`flex flex-col h-full ${narrow ? "w-[42.5px]" : "w-[62px]"} ${active ? "bg-[#33363c]" : ""}`}>
      <div className="flex-1 flex items-center justify-center">{children}</div>
      <div className={`${narrow ? "h-[2px] mx-[2px]" : "h-[3px] mx-[3px]"} ${under ? "bg-[#76b9ed]" : ""}`} />
    </div>
  );
}

function Tray({ big }: { big?: boolean }) {
  const s = big ? 1 : 0.75;
  return (
    <div className={`ml-auto flex items-center text-white font-['Open_Sans',sans-serif] ${big ? "gap-[8px] pr-[29px]" : "gap-[4.5px] pr-[21px]"}`}>
      <ChevronUp size={big ? 20 : 16} strokeWidth={1.1} />
      <svg viewBox="0 0 22 18" width={22 * s} height={18 * s} fill="none" stroke="#fff"><rect x="4" y="4" width="17" height="13" /><rect x="7" y="7" width="11" height="8" fill="#fff" /><path d="M1 1v6h4V1" /></svg>
      <svg viewBox="0 0 22 20" width={22 * s} height={20 * s} fill="none" stroke="#fff"><rect x="1" y="1" width="20" height="14" /><rect x="1" y="1" width="5" height="9" /><path d="M11 15v4M5 19h12" /></svg>
      <svg viewBox="0 0 22 20" width={22 * s} height={20 * s} fill="none" stroke="#fff"><path d="M2 7h4l5-5v16l-5-5H2zM14 6q3 4 0 8M17 3q5 7 0 14" /></svg>
      <div className={`text-center whitespace-nowrap ${big ? "w-[70px] text-[14px] leading-[24px] ml-[3px]" : "w-[54px] text-[10px] leading-[15px] -ml-[1px]"}`}>4:48 PM<br />10/8/2020</div>
      <svg viewBox="0 0 20 20" width={big ? 22 : 16} height={big ? 22 : 16} fill="none" stroke="#fff" className={big ? "ml-[14px]" : "ml-[4.5px]"}><path d="M1 1h18v14h-7l-2 3-2-3H1z" /></svg>
    </div>
  );
}

function InnerTaskbar() {
  return (
    <div className="h-[35px] bg-[#070b12] flex items-stretch">
      <div className="w-[42px] flex items-center justify-center"><WinLogo s={15} /></div>
      <div className="w-[41px] flex items-center justify-center"><SearchGlyph s={15} /></div>
      <div className="w-[41px] flex items-center justify-center"><TaskView s={14} /></div>
      <div className="w-[3px]" />
      <TBtn narrow under><Outlook s={20} /></TBtn>
      <TBtn narrow><Ie s={20} /></TBtn>
      <TBtn narrow under><Folder s={19} /></TBtn>
      <TBtn narrow under><Chrome s={19} /></TBtn>
      <TBtn narrow under><Skype s={19} badge /></TBtn>
      <TBtn narrow under><svg viewBox="0 0 24 24" width="19" height="19" fill="none" stroke="#3aa52d" strokeWidth="3"><circle cx="12" cy="12" r="9" strokeDasharray="12 3" /></svg></TBtn>
      <TBtn narrow under><RLogo s={20} /></TBtn>
      <TBtn narrow under><svg viewBox="0 0 22 24" width="20" height="21"><rect width="22" height="24" fill="#8cc63f" /><path d="M5 20v-6M9 20V7M13 20v-9M17 20v-5" stroke="#fff" strokeWidth="2" /></svg></TBtn>
      <TBtn narrow under><svg viewBox="0 0 22 18" width="20" height="17"><rect width="22" height="18" rx="1" fill="#2c2c2e" stroke="#666" /><rect x="2" y="2" width="18" height="3" fill="#555" /></svg></TBtn>
      <TBtn narrow under><TileText bg="bg-[#1d7044]" s={20}>X</TileText></TBtn>
      <TBtn narrow under active><PPIcon className="w-[20px] h-[20px]" /></TBtn>
      <TBtn narrow under><ZoomIcon className="w-[19px] h-[20px]" r={7} /></TBtn>
      <Tray />
    </div>
  );
}

function ZItem({ className, label, labelClass = "text-[#b5b5b5]", children, caret }: { className: string; label: string; labelClass?: string; children: React.ReactNode; caret?: string }) {
  return (
    <div className={`relative flex flex-col items-center pt-[9px] shrink-0 ${className}`}>
      <div className="h-[26px] flex items-center justify-center">{children}</div>
      <div className={`mt-[7px] text-[14.5px] leading-[20px] whitespace-nowrap ${labelClass}`}>{label}</div>
      {caret && <ChevronUp size={11} strokeWidth={2} color="#b5b5b5" className={`absolute top-[16px] ${caret}`} />}
    </div>
  );
}

function ZoomBar() {
  return (
    <div className="h-[66px] bg-[#1a1a1a] flex font-['Open_Sans',sans-serif] shrink-0">
      <ZItem className="w-[80px] ml-[18px]" label="Mute" caret="left-[73px]">
        <svg viewBox="0 0 20 28" className="w-[18px] h-[26px]" fill="#9b9b9b"><rect x="5" y="0" width="10" height="18" rx="5" /><path d="M2 12v2a8 8 0 0 0 16 0v-2" fill="none" stroke="#9b9b9b" strokeWidth="1.6" /><path d="M9.2 22h1.6v4H15v1.6H5V26h4.2z" /></svg>
      </ZItem>
      <ZItem className="w-[100px] ml-[26px]" label="Start Video" caret="left-[91px]">
        <svg viewBox="0 0 32 28" className="w-[32px] h-[28px]"><rect x="1" y="7" width="20" height="17" rx="2" fill="#9b9b9b" /><path d="M23 12l8-4v15l-8-4z" fill="#9b9b9b" /><path d="M3 27 L28 1" stroke="#e02020" strokeWidth="1.4" /></svg>
      </ZItem>
      <ZItem className="w-[100px] ml-[629px]" label="Participants" caret="left-[110px]">
        <svg viewBox="0 0 42 24" className="w-[44px] h-[24px] ml-[10px]" fill="#a3a3a3"><circle cx="9" cy="6" r="5.2" /><path d="M0 24v-5a9 8 0 0 1 18 0v5z" /><circle cx="22" cy="9" r="4" /><path d="M15 24a7 9 0 0 1 15 0z" /><text x="35" y="13" fontSize="13" stroke="none" fontFamily="'Open Sans'">3</text></svg>
      </ZItem>
      <ZItem className="w-[60px] ml-[52px]" label="Chat">
        <div className="relative">
          <svg viewBox="0 0 24 24" className="w-[25px] h-[25px]"><path d="M4 2h14a3 3 0 0 1 3 3v9a3 3 0 0 1-3 3H10l-5 6 1-6H4a3 3 0 0 1-3-3V5a3 3 0 0 1 3-3z" fill="#a3a3a3" /></svg>
          <div className="absolute -top-[5px] -right-[8px] w-[18px] h-[19px] rounded-[7px] bg-[#e8333c] text-white text-[12px] leading-[19px] font-bold text-center">1</div>
        </div>
      </ZItem>
      <ZItem className="w-[120px] ml-[21px]" label="Share Screen" labelClass="text-[#23c552]">
        <div className="w-[30px] h-[23px] rounded-[3px] bg-[#1fd35f] flex items-center justify-center">
          <svg viewBox="0 0 12 14" className="w-[10px] h-[13px]" fill="#0b2e17"><path d="M6 0l5 5.5H7.2V14H4.8V5.5H1z" /></svg>
        </div>
      </ZItem>
      <div className="ml-auto mr-[15px] mt-[15px] w-[77px] h-[34px] rounded-[8px] bg-[#b3262a] flex items-center justify-center text-white font-bold text-[14px]">Leave</div>
    </div>
  );
}

function WinTaskbar() {
  return (
    <div className="h-[50px] bg-[#060606] flex items-stretch shrink-0">
      <div className="w-[60px] flex items-center justify-center"><WinLogo s={22} /></div>
      <div className="w-[60px] flex items-center justify-center"><SearchGlyph s={24} /></div>
      <div className="w-[60px] flex items-center justify-center"><TaskView s={24} /></div>
      <div className="w-[3px]" />
      <TBtn><Folder s={30} /></TBtn>
      <TBtn under><Outlook s={30} /></TBtn>
      <TBtn under>
        <svg viewBox="0 0 24 28" width="26" height="30"><rect width="24" height="28" rx="1" fill="#ffc808" /><path d="M15 28v-8h9z" fill="#333" /></svg>
      </TBtn>
      <TBtn>
        <svg viewBox="0 0 24 28" width="26" height="30"><rect x="2" y="2" width="18" height="25" fill="#e8f0d8" stroke="#888" /><path d="M5 22Q8 8 16 14 T14 24Z" fill="#5cae3a" /><path d="M18 16L23 1" stroke="#c8a020" strokeWidth="1.5" /></svg>
      </TBtn>
      <TBtn><RLogo s={30} /></TBtn>
      <TBtn under active><ZoomIcon className="w-[28px] h-[34px]" r={8} /></TBtn>
      <TBtn under><Ie s={30} /></TBtn>
      <TBtn under><Skype s={30} /></TBtn>
      <TBtn>
        <svg viewBox="0 0 28 30" width="28" height="30" fill="none" stroke="#bbb" strokeWidth="1"><path d="M14 1l11 6 2 10-7 10-6 3-6-3-7-10 2-10z" /><path d="M14 1v29M3 7l22 20M25 7L3 27M1 17h26" /><path d="M6 16l5 3 4-6 4 5 3-2" stroke="#e02020" strokeWidth="2" /></svg>
      </TBtn>
      <Tray big />
    </div>
  );
}

export default function App() {
  return (
    <div className="relative w-[1920px] h-[1080px] overflow-hidden flex flex-col bg-[#1a1a1a] font-['Open_Sans',sans-serif]">
      <div className="h-[29px] bg-white flex items-center shrink-0">
        <ZoomIcon className="w-[18px] h-[18px] ml-[2px]" r={5} />
        <span className="ml-[7px] text-[14.5px] text-black whitespace-nowrap">Zoom Meeting</span>
        <div className="ml-auto flex items-center">
          <div className="w-[57px] flex justify-center"><Minus size={14} strokeWidth={1.2} color="#000" /></div>
          <div className="w-[57px] mr-[3px] flex justify-center">
            <svg viewBox="0 0 12 14" className="w-[12px] h-[14px]" fill="none" stroke="#000"><rect x=".5" y="3.5" width="8" height="10" /><path d="M3 3V.5h8.5V11H9" /></svg>
          </div>
          <div className="w-[60px] flex justify-center pr-[3px]"><X size={17} strokeWidth={1} color="#000" /></div>
        </div>
      </div>
      <div className="absolute left-[716px] top-0 h-[27px] flex rounded-b-[4px] overflow-hidden shadow-[0_2px_4px_rgba(0,0,0,0.5)] text-[14px] font-bold z-10">
        <div className="w-[334px] bg-[#46c000] text-[#173a05] flex items-center justify-center whitespace-nowrap">You are viewing Agrawal, Raghav's screen</div>
        <div className="w-[153px] bg-[#232326] text-white flex items-center pl-[35px] gap-[5px] whitespace-nowrap">View Options <ChevronDown size={12} strokeWidth={2.5} /></div>
      </div>
      <div className="flex h-[935px] shrink-0">
        <div className="w-[129px] bg-[#1a1a1a] shrink-0 pt-[11px] pl-[10px]">
          <div className="w-[30px] h-[30px] rounded-[7px] bg-[#222] flex items-center justify-center">
            <svg viewBox="0 0 20 22" className="w-[16px] h-[19px]"><path d="M10 0L19 3V11Q19 18 10 22 1 18 1 11V3Z" fill="#17c25a" /><path d="M5.5 10.5L9 14l5.5-6" stroke="#062" strokeWidth="2.2" fill="none" /></svg>
          </div>
        </div>
        <div className="flex-1 flex flex-col min-w-0 bg-white">
          <PPTop />
          <Ribbon />
          <div className="h-[758px] flex overflow-hidden">
            <ThumbPane />
            <MainView />
          </div>
          <StatusBar />
          <InnerTaskbar />
        </div>
        <div className="w-[129px] bg-[#1a1a1a] shrink-0 pt-[7px] pl-[51px]">
          <div className="w-[68px] h-[33px] rounded-[8px] bg-[#232323] flex items-center justify-center gap-[5px] text-[#e2e2e2] text-[14px]">
            <svg viewBox="0 0 14 14" className="w-[13px] h-[13px]" fill="#d8d8d8"><rect x="0" y="0" width="6" height="3" /><rect x="8" y="0" width="6" height="3" /><rect x="0" y="4.5" width="14" height="9.5" /></svg>
            View
          </div>
        </div>
      </div>
      <ZoomBar />
      <WinTaskbar />
    </div>
  );
}
